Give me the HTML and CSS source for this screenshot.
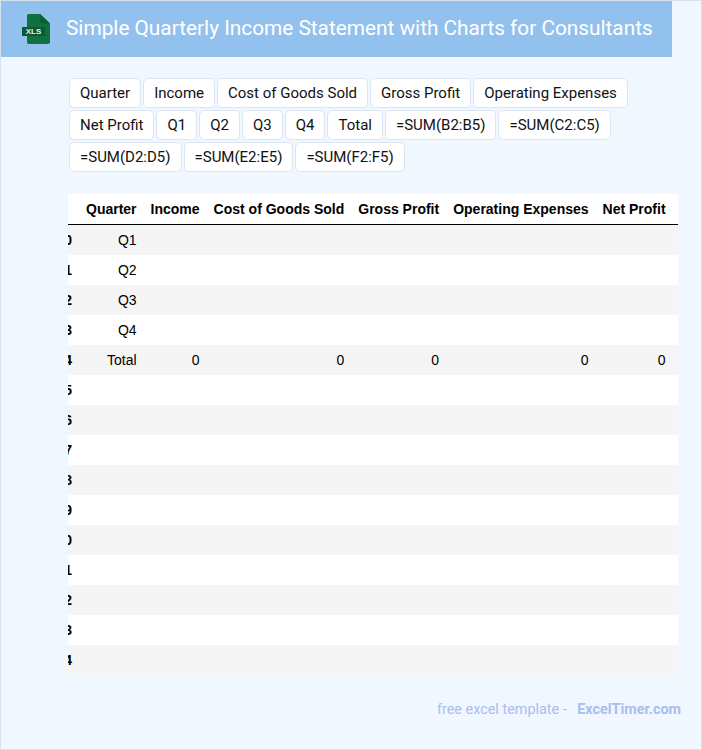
FILE: index.html
```html
<!DOCTYPE html>
<html lang="en">
<head>
<meta charset="utf-8">
<title>Simple Quarterly Income Statement with Charts for Consultants</title>
<link rel="stylesheet" href="styles.css">
</head>
<body>
<div class="page">
  <header class="banner">
    <svg class="file-icon" width="32" height="32" viewBox="0 0 32 32" aria-hidden="true">
      <path class="file-body" d="M7 2.500a1.500 1.500 0 0 1 1.500-1.500H20l10 9.500V29a2 2 0 0 1-2 2H9a2 2 0 0 1-2-2z"/>
      <path class="file-fold" d="M20 1l10 9.500h-7.500a2.500 2.500 0 0 1-2.500-2.500z"/>
      <rect class="file-band" x="2" y="14" width="23" height="9"/>
      <text class="file-label" x="13.500" y="21.300" text-anchor="middle">XLS</text>
    </svg>
    <h1 class="title">Simple Quarterly Income Statement with Charts for Consultants</h1>
  </header>
  <div class="tags">
    <span class="tag">Quarter</span>
    <span class="tag">Income</span>
    <span class="tag">Cost of Goods Sold</span>
    <span class="tag">Gross Profit</span>
    <span class="tag">Operating Expenses</span>
    <span class="tag">Net Profit</span>
    <span class="tag">Q1</span>
    <span class="tag">Q2</span>
    <span class="tag">Q3</span>
    <span class="tag">Q4</span>
    <span class="tag">Total</span>
    <span class="tag">=SUM(B2:B5)</span>
    <span class="tag">=SUM(C2:C5)</span>
    <span class="tag">=SUM(D2:D5)</span>
    <span class="tag">=SUM(E2:E5)</span>
    <span class="tag">=SUM(F2:F5)</span>
  </div>
  <div class="table-scroll">
    <table class="sheet">
      <thead>
        <tr><th></th><th>Quarter</th><th>Income</th><th>Cost of Goods Sold</th><th>Gross Profit</th><th>Operating Expenses</th><th>Net Profit</th></tr>
      </thead>
      <tbody>
        <tr><th>0</th><td>Q1</td><td></td><td></td><td></td><td></td><td></td></tr>
        <tr><th>1</th><td>Q2</td><td></td><td></td><td></td><td></td><td></td></tr>
        <tr><th>2</th><td>Q3</td><td></td><td></td><td></td><td></td><td></td></tr>
        <tr><th>3</th><td>Q4</td><td></td><td></td><td></td><td></td><td></td></tr>
        <tr><th>4</th><td>Total</td><td>0</td><td>0</td><td>0</td><td>0</td><td>0</td></tr>
        <tr><th>5</th><td></td><td></td><td></td><td></td><td></td><td></td></tr>
        <tr><th>6</th><td></td><td></td><td></td><td></td><td></td><td></td></tr>
        <tr><th>7</th><td></td><td></td><td></td><td></td><td></td><td></td></tr>
        <tr><th>8</th><td></td><td></td><td></td><td></td><td></td><td></td></tr>
        <tr><th>9</th><td></td><td></td><td></td><td></td><td></td><td></td></tr>
        <tr><th>10</th><td></td><td></td><td></td><td></td><td></td><td></td></tr>
        <tr><th>11</th><td></td><td></td><td></td><td></td><td></td><td></td></tr>
        <tr><th>12</th><td></td><td></td><td></td><td></td><td></td><td></td></tr>
        <tr><th>13</th><td></td><td></td><td></td><td></td><td></td><td></td></tr>
        <tr><th>14</th><td></td><td></td><td></td><td></td><td></td><td></td></tr>
      </tbody>
    </table>
  </div>
  <footer class="credit">free excel template - <strong class="brand">ExcelTimer.com</strong></footer>
</div>
</body>
</html>
```

FILE: styles.css
```css
* { box-sizing: border-box; }
html, body { margin: 0; padding: 0; }
body { font-family: Roboto, "Liberation Sans", sans-serif; }
.page {
  width: 702px;
  height: 750px;
  background: #f0f7ff;
  border: 1px solid #d4e2f0;
  overflow: hidden;
}
.banner {
  width: 671px;
  height: 56px;
  background: #93c1ee;
  display: flex;
  align-items: center;
  padding-left: 19px;
  padding-bottom: 1px;
  gap: 14px;
}
.file-icon { flex: none; margin-top: 1px; }
.file-body { fill: #107040; }
.file-fold { fill: #0d5f36; }
.file-band { fill: #0b5a33; }
.file-label { font: 700 8px "Liberation Sans", sans-serif; letter-spacing: -0.1px; fill: #e4efe8; }
.title {
  margin: 0 0 2px;
  font-size: 20.800px;
  font-weight: 400;
  color: #fff;
  white-space: nowrap;
}
.tags {
  display: flex;
  flex-wrap: wrap;
  gap: 2px;
  margin: 21px 67px 0 68px;
}
.tag {
  height: 30px;
  line-height: 29px;
  padding: 0 10px;
  background: #fff;
  border: 1px solid #dce6f2;
  border-radius: 5px;
  font-size: 15px;
  color: #111;
}
.table-scroll {
  width: 610px;
  margin: 22px 0 0 67px;
  overflow: hidden;
}
.sheet {
  margin-left: -19px;
  border-collapse: separate;
  border-spacing: 0;
  font-family: "Liberation Sans", Arial, sans-serif;
  font-size: 14px;
  color: #000;
  background: #fff;
}
.sheet th, .sheet td {
  height: 30px;
  padding: 0 7px;
  text-align: right;
  white-space: nowrap;
}
.sheet th:first-child { width: 30px; min-width: 30px; }
.sheet th:last-child, .sheet td:last-child { padding-right: 13px; }
.sheet thead th { height: 31px; border-bottom: 1px solid #000; }
.sheet tbody tr:nth-child(odd) { background: #f5f5f5; }
.credit {
  margin: 26px 20px 0 0;
  text-align: right;
  font-size: 14.400px;
  color: #a8bdf0;
}
.brand { margin-left: 7px; font-weight: 700; }
```
